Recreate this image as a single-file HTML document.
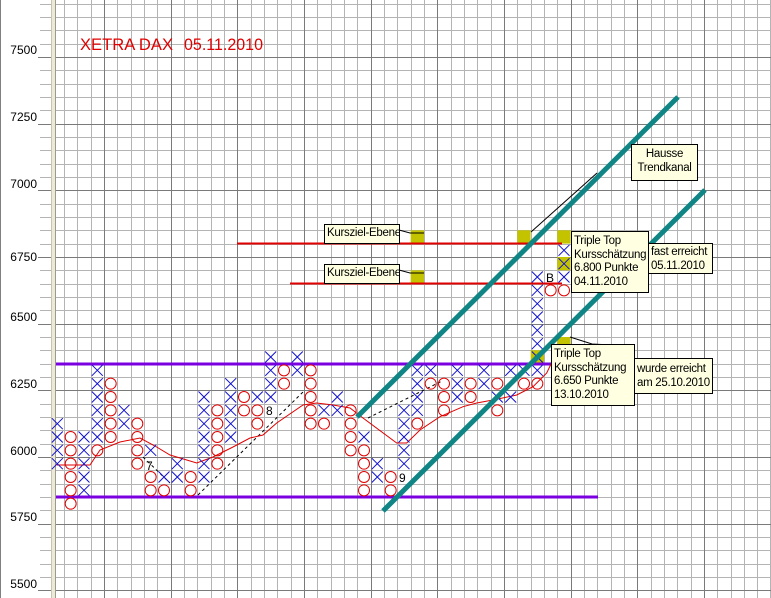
<!DOCTYPE html>
<html><head><meta charset="utf-8"><style>
body{margin:0;width:771px;height:598px;overflow:hidden;background:#fff;position:relative;font-family:"Liberation Sans",Arial,sans-serif}
svg{position:absolute;left:0;top:0}
.tip{position:absolute;background:#ffffe1;border:1px solid #000;font-size:11.5px;line-height:13.5px;color:#000;padding:1px 2px;box-sizing:border-box;white-space:nowrap;letter-spacing:-0.3px;overflow:hidden}
.ax{position:absolute;right:734px;font-size:12px;color:#000}
</style></head><body>
<svg width="771" height="598" xmlns="http://www.w3.org/2000/svg">
<rect x="0" y="0" width="771" height="598" fill="#fff"/>
<line x1="0.5" y1="0" x2="0.5" y2="598" stroke="#808080"/>
<g stroke="#b4b4b4" stroke-width="1">
<path d="M64.5 0V598M77.5 0V598M91.5 0V598M117.5 0V598M131.5 0V598M144.5 0V598M157.5 0V598M184.5 0V598M197.5 0V598M211.5 0V598M224.5 0V598M251.5 0V598M264.5 0V598M277.5 0V598M291.5 0V598M317.5 0V598M331.5 0V598M344.5 0V598M357.5 0V598M384.5 0V598M397.5 0V598M411.5 0V598M424.5 0V598M451.5 0V598M464.5 0V598M477.5 0V598M491.5 0V598M517.5 0V598M531.5 0V598M544.5 0V598M557.5 0V598M584.5 0V598M597.5 0V598M611.5 0V598M624.5 0V598M651.5 0V598M664.5 0V598M677.5 0V598M691.5 0V598M717.5 0V598M731.5 0V598M744.5 0V598M757.5 0V598M770.5 0V598"/>
<path d="M55 4.5H771M55 17.5H771M55 30.5H771M55 44.5H771M55 70.5H771M55 84.5H771M55 97.5H771M55 110.5H771M55 137.5H771M55 150.5H771M55 164.5H771M55 177.5H771M55 204.5H771M55 217.5H771M55 230.5H771M55 244.5H771M55 270.5H771M55 284.5H771M55 297.5H771M55 310.5H771M55 337.5H771M55 350.5H771M55 364.5H771M55 377.5H771M55 404.5H771M55 417.5H771M55 430.5H771M55 444.5H771M55 470.5H771M55 484.5H771M55 497.5H771M55 510.5H771M55 537.5H771M55 550.5H771M55 564.5H771M55 577.5H771"/>
<path d="M40 4.5H51M40 17.5H51M40 30.5H51M40 44.5H51M40 70.5H51M40 84.5H51M40 97.5H51M40 110.5H51M40 137.5H51M40 150.5H51M40 164.5H51M40 177.5H51M40 204.5H51M40 217.5H51M40 230.5H51M40 244.5H51M40 270.5H51M40 284.5H51M40 297.5H51M40 310.5H51M40 337.5H51M40 350.5H51M40 364.5H51M40 377.5H51M40 404.5H51M40 417.5H51M40 430.5H51M40 444.5H51M40 470.5H51M40 484.5H51M40 497.5H51M40 510.5H51M40 537.5H51M40 550.5H51M40 564.5H51M40 577.5H51"/>
</g>
<g stroke="#7a7a7a" stroke-width="1">
<path d="M104.5 0V598M171.5 0V598M237.5 0V598M304.5 0V598M371.5 0V598M437.5 0V598M504.5 0V598M571.5 0V598M637.5 0V598M704.5 0V598"/>
<path d="M55 57.5H771M55 124.5H771M55 190.5H771M55 257.5H771M55 324.5H771M55 390.5H771M55 457.5H771M55 524.5H771M55 590.5H771"/>
<path d="M38 57.5H51M38 124.5H51M38 190.5H51M38 257.5H51M38 324.5H51M38 390.5H51M38 457.5H51M38 524.5H51M38 590.5H51"/>
</g>
<rect x="51" y="0" width="4" height="598" fill="#ece9d8"/>
<line x1="51.5" y1="0" x2="51.5" y2="598" stroke="#c8c4b0"/>
<line x1="55.5" y1="0" x2="55.5" y2="598" stroke="#9d9a8a"/>
<g fill="#c3c300">
<rect x="410.7" y="230.3" width="13.3" height="13.3"/>
<rect x="410.7" y="270.3" width="13.3" height="13.3"/>
<rect x="517.3" y="230.3" width="13.3" height="13.3"/>
<rect x="557.3" y="230.3" width="13.3" height="13.3"/>
<rect x="557.3" y="257" width="13.3" height="13.3"/>
<rect x="530.7" y="350.3" width="13.3" height="13.3"/>
<rect x="557.3" y="337" width="13.3" height="13.3"/>
</g>
<line x1="237" y1="243.5" x2="562" y2="243.5" stroke="#e00000" stroke-width="2"/>
<line x1="290" y1="283.5" x2="562" y2="283.5" stroke="#e00000" stroke-width="2"/>
<line x1="56" y1="364" x2="556" y2="364" stroke="#7a00e0" stroke-width="3"/>
<line x1="56" y1="497" x2="598" y2="497" stroke="#7a00e0" stroke-width="3"/>
<g stroke="#000" stroke-width="1" stroke-dasharray="3,3" fill="none">
<path d="M198 495L303 392"/>
<path d="M143 457L170 483"/>
<path d="M368 418L442 381"/>
</g>
<path d="M56.7 465L90 465L100 450L120 442L140 438L155 446L170 455L196.7 463L213 457L233 447L250 438L263 435L276.7 423L303 405L316.7 403L333 405L350 408L363 418L396.7 443L406.7 443L420 430L440 416.7L463 406.7L476.7 403L493 400L516.7 395L533 386.7L546.7 373L552 362" fill="none" stroke="#e00000" stroke-width="1"/>
<g stroke="#1010d0" stroke-width="1" fill="none">
<path d="M51.8 418.2l11 11m0-11l-11 11M51.8 431.5l11 11m0-11l-11 11M51.8 444.8l11 11m0-11l-11 11M51.8 458.2l11 11m0-11l-11 11"/>
<path d="M78.5 431.5l11 11m0-11l-11 11M78.5 444.8l11 11m0-11l-11 11M78.5 458.2l11 11m0-11l-11 11M78.5 471.5l11 11m0-11l-11 11M78.5 484.8l11 11m0-11l-11 11"/>
<path d="M91.8 364.8l11 11m0-11l-11 11M91.8 378.2l11 11m0-11l-11 11M91.8 391.5l11 11m0-11l-11 11M91.8 404.8l11 11m0-11l-11 11M91.8 418.2l11 11m0-11l-11 11M91.8 431.5l11 11m0-11l-11 11"/>
<path d="M118.5 404.8l11 11m0-11l-11 11M118.5 418.2l11 11m0-11l-11 11"/>
<path d="M145.2 444.8l11 11m0-11l-11 11M158.5 471.5l11 11m0-11l-11 11M171.8 458.2l11 11m0-11l-11 11M171.8 471.5l11 11m0-11l-11 11"/>
<path d="M198.5 391.5l11 11m0-11l-11 11M198.5 404.8l11 11m0-11l-11 11M198.5 418.2l11 11m0-11l-11 11M198.5 431.5l11 11m0-11l-11 11M198.5 444.8l11 11m0-11l-11 11M198.5 458.2l11 11m0-11l-11 11M198.5 471.5l11 11m0-11l-11 11"/>
<path d="M225.2 378.2l11 11m0-11l-11 11M225.2 391.5l11 11m0-11l-11 11M225.2 404.8l11 11m0-11l-11 11M225.2 418.2l11 11m0-11l-11 11M225.2 431.5l11 11m0-11l-11 11"/>
<path d="M251.8 391.5l11 11m0-11l-11 11"/>
<path d="M265.2 351.5l11 11m0-11l-11 11M265.2 364.8l11 11m0-11l-11 11M265.2 378.2l11 11m0-11l-11 11M265.2 391.5l11 11m0-11l-11 11"/>
<path d="M291.8 351.5l11 11m0-11l-11 11M291.8 364.8l11 11m0-11l-11 11"/>
<path d="M318.5 404.8l11 11m0-11l-11 11M331.8 391.5l11 11m0-11l-11 11M331.8 404.8l11 11m0-11l-11 11"/>
<path d="M358.5 431.5l11 11m0-11l-11 11M371.8 458.2l11 11m0-11l-11 11M371.8 471.5l11 11m0-11l-11 11"/>
<path d="M398.5 404.8l11 11m0-11l-11 11M398.5 418.2l11 11m0-11l-11 11M398.5 431.5l11 11m0-11l-11 11M398.5 444.8l11 11m0-11l-11 11M398.5 458.2l11 11m0-11l-11 11"/>
<path d="M411.8 364.8l11 11m0-11l-11 11M411.8 378.2l11 11m0-11l-11 11M411.8 391.5l11 11m0-11l-11 11M411.8 404.8l11 11m0-11l-11 11M425.2 364.8l11 11m0-11l-11 11"/>
<path d="M451.8 364.8l11 11m0-11l-11 11M451.8 378.2l11 11m0-11l-11 11M451.8 391.5l11 11m0-11l-11 11M478.5 364.8l11 11m0-11l-11 11M478.5 378.2l11 11m0-11l-11 11"/>
<path d="M491.8 391.5l11 11m0-11l-11 11M505.2 364.8l11 11m0-11l-11 11M505.2 391.5l11 11m0-11l-11 11M518.5 364.8l11 11m0-11l-11 11"/>
<path d="M531.8 271.5l11 11m0-11l-11 11M531.8 284.8l11 11m0-11l-11 11M531.8 298.2l11 11m0-11l-11 11M531.8 311.5l11 11m0-11l-11 11M531.8 324.8l11 11m0-11l-11 11M531.8 338.2l11 11m0-11l-11 11M531.8 351.5l11 11m0-11l-11 11M531.8 364.8l11 11m0-11l-11 11"/>
<path d="M558.5 244.8l11 11m0-11l-11 11M558.5 258.2l11 11m0-11l-11 11M558.5 271.5l11 11m0-11l-11 11"/>
</g>
<g stroke="#e00000" stroke-width="1" fill="none">
<circle cx="70.67" cy="437" r="5.5"/><circle cx="70.67" cy="450.33" r="5.5"/><circle cx="70.67" cy="463.67" r="5.5"/><circle cx="70.67" cy="477" r="5.5"/><circle cx="70.67" cy="490.33" r="5.5"/><circle cx="70.67" cy="503.67" r="5.5"/>
<circle cx="97.33" cy="450.33" r="5.5"/>
<circle cx="110.67" cy="383.67" r="5.5"/><circle cx="110.67" cy="397" r="5.5"/><circle cx="110.67" cy="410.33" r="5.5"/><circle cx="110.67" cy="423.67" r="5.5"/><circle cx="110.67" cy="437" r="5.5"/>
<circle cx="137.33" cy="423.67" r="5.5"/><circle cx="137.33" cy="437" r="5.5"/><circle cx="137.33" cy="450.33" r="5.5"/><circle cx="137.33" cy="463.67" r="5.5"/>
<circle cx="150.67" cy="477" r="5.5"/><circle cx="150.67" cy="490.33" r="5.5"/><circle cx="164" cy="490.33" r="5.5"/>
<circle cx="190.67" cy="477" r="5.5"/><circle cx="190.67" cy="490.33" r="5.5"/>
<circle cx="217.33" cy="410.33" r="5.5"/><circle cx="217.33" cy="423.67" r="5.5"/><circle cx="217.33" cy="437" r="5.5"/><circle cx="217.33" cy="450.33" r="5.5"/><circle cx="217.33" cy="463.67" r="5.5"/>
<circle cx="244" cy="397" r="5.5"/><circle cx="244" cy="410.33" r="5.5"/>
<circle cx="257.33" cy="410.33" r="5.5"/><circle cx="257.33" cy="423.67" r="5.5"/>
<circle cx="284" cy="370.33" r="5.5"/><circle cx="284" cy="383.67" r="5.5"/>
<circle cx="310.67" cy="370.33" r="5.5"/><circle cx="310.67" cy="383.67" r="5.5"/><circle cx="310.67" cy="397" r="5.5"/><circle cx="310.67" cy="410.33" r="5.5"/><circle cx="310.67" cy="423.67" r="5.5"/>
<circle cx="324" cy="423.67" r="5.5"/>
<circle cx="350.67" cy="410.33" r="5.5"/><circle cx="350.67" cy="423.67" r="5.5"/><circle cx="350.67" cy="437" r="5.5"/><circle cx="350.67" cy="450.33" r="5.5"/>
<circle cx="364" cy="450.33" r="5.5"/><circle cx="364" cy="463.67" r="5.5"/><circle cx="364" cy="477" r="5.5"/><circle cx="364" cy="490.33" r="5.5"/>
<circle cx="390.67" cy="477" r="5.5"/><circle cx="390.67" cy="490.33" r="5.5"/>
<circle cx="417.33" cy="423.67" r="5.5"/><circle cx="430.67" cy="383.67" r="5.5"/>
<circle cx="444" cy="383.67" r="5.5"/><circle cx="444" cy="397" r="5.5"/><circle cx="444" cy="410.33" r="5.5"/>
<circle cx="470.67" cy="383.67" r="5.5"/><circle cx="470.67" cy="397" r="5.5"/>
<circle cx="497.33" cy="383.67" r="5.5"/><circle cx="497.33" cy="410.33" r="5.5"/>
<circle cx="524" cy="383.67" r="5.5"/><circle cx="537.33" cy="383.67" r="5.5"/>
<circle cx="550.67" cy="290.33" r="5.5"/><circle cx="564" cy="290.33" r="5.5"/>
</g>
<line x1="357" y1="417" x2="678" y2="97" stroke="#0f8585" stroke-width="5"/>
<line x1="383" y1="511" x2="705" y2="190" stroke="#0f8585" stroke-width="5"/>
<g stroke="#000" stroke-width="1" fill="none">
<path d="M399 230L410 233L424 233"/>
<path d="M399 270L410 273L424 273"/>
<path d="M597 173L531 232"/>
<path d="M570 337L592 344L630 346"/>
</g>
<g font-family="Liberation Sans, Arial, sans-serif" font-size="12" fill="#000">
<text x="146" y="470">7</text>
<text x="266" y="415">8</text>
<text x="399" y="482">9</text>
<text x="546" y="282">B</text>
</g>
<g font-family="Liberation Sans, Arial, sans-serif" font-size="17" fill="#e00000">
<text x="80" y="50" textLength="93" lengthAdjust="spacingAndGlyphs">XETRA DAX</text>
<text x="184" y="50" textLength="79" lengthAdjust="spacingAndGlyphs">05.11.2010</text>
</g>
</svg>
<div class="ax" style="top:43px">7500</div>
<div class="ax" style="top:110px">7250</div>
<div class="ax" style="top:177px">7000</div>
<div class="ax" style="top:250px">6750</div>
<div class="ax" style="top:310px">6500</div>
<div class="ax" style="top:377px">6250</div>
<div class="ax" style="top:444px">6000</div>
<div class="ax" style="top:510px">5750</div>
<div class="ax" style="top:577px">5500</div>
<div class="tip" style="left:324px;top:224px;width:76px;height:20px;padding-top:2px">Kursziel-Ebene</div>
<div class="tip" style="left:324px;top:264px;width:76px;height:20px;padding-top:2px">Kursziel-Ebene</div>
<div class="tip" style="left:631px;top:144px;width:67px;height:37px;text-align:center;padding-top:3px">Hausse<br>Trendkanal</div>
<div class="tip" style="left:571px;top:231px;width:78px;height:62px;padding-top:3px">Triple Top<br>Kursschätzung<br>6.800 Punkte<br>04.11.2010</div>
<div class="tip" style="left:648px;top:243px;width:65px;height:31px;padding-top:2px">fast erreicht<br>05.11.2010</div>
<div class="tip" style="left:551px;top:344px;width:84px;height:62px;padding-top:3px">Triple Top<br>Kursschätzung<br>6.650 Punkte<br>13.10.2010</div>
<div class="tip" style="left:634px;top:358px;width:79px;height:36px;padding-top:4px">wurde erreicht<br>am 25.10.2010</div>
</body></html>
